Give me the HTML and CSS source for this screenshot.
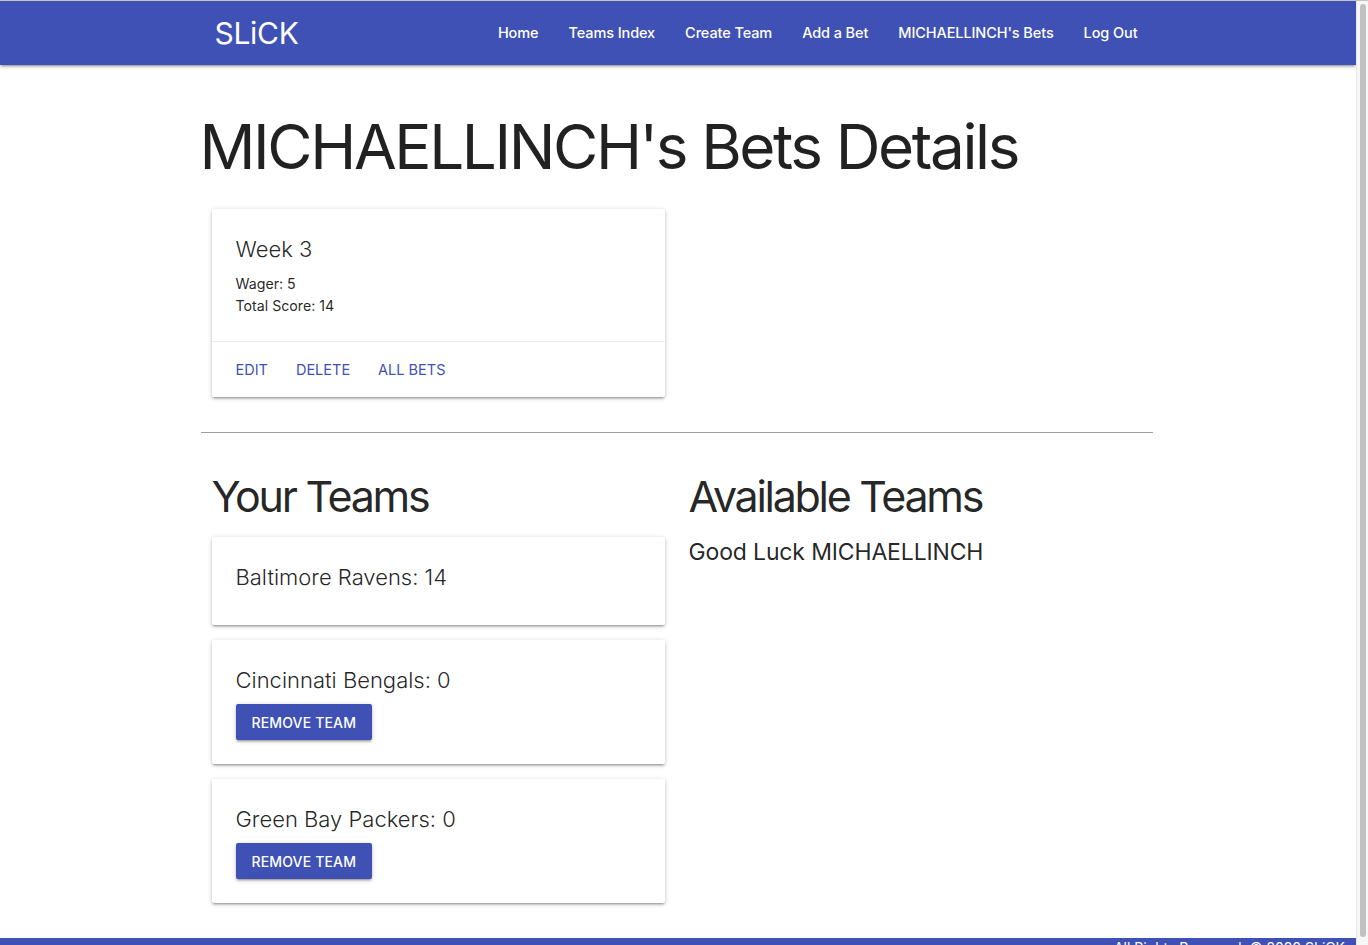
FILE: index.html
```html
<!DOCTYPE html>
<html lang="en">
<head>
<meta charset="utf-8">
<title>SLiCK</title>
<link rel="stylesheet" href="styles.css">
</head>
<body>
<div class="window">
  <div class="page">
    <nav class="nav">
      <div class="nav-wrapper">
        <a class="brand-logo" href="#">SLiCK</a>
        <ul class="nav-links">
          <li><a href="#">Home</a></li>
          <li><a href="#">Teams Index</a></li>
          <li><a href="#">Create Team</a></li>
          <li><a href="#">Add a Bet</a></li>
          <li><a href="#">MICHAELLINCH's Bets</a></li>
          <li><a href="#">Log Out</a></li>
        </ul>
      </div>
    </nav>
    <main class="container">
      <h1 class="page-title">MICHAELLINCH's Bets Details</h1>
      <div class="bet-row">
        <div class="card">
          <div class="card-content">
            <span class="card-title">Week 3</span>
            <p class="card-text">Wager: 5</p>
            <p class="card-text">Total Score: 14</p>
          </div>
          <div class="card-action">
            <a href="#">Edit</a>
            <a href="#">Delete</a>
            <a href="#">All Bets</a>
          </div>
        </div>
      </div>
      <hr class="divider">
      <div class="teams-row">
        <section class="teams-col">
          <h3 class="section-title">Your Teams</h3>
          <div class="card">
            <div class="card-content">
              <span class="card-title">Baltimore Ravens: 14</span>
            </div>
          </div>
          <div class="card">
            <div class="card-content">
              <span class="card-title">Cincinnati Bengals: 0</span>
              <button class="btn">Remove Team</button>
            </div>
          </div>
          <div class="card">
            <div class="card-content">
              <span class="card-title">Green Bay Packers: 0</span>
              <button class="btn">Remove Team</button>
            </div>
          </div>
        </section>
        <section class="avail-col">
          <h3 class="section-title">Available Teams</h3>
          <h5 class="luck">Good Luck MICHAELLINCH</h5>
        </section>
      </div>
    </main>
    <footer class="footer">
      <span class="copyright">All Rights Reserved. © 2020 SLiCK</span>
    </footer>
  </div>
  <div class="scrollbar"><div class="thumb"></div></div>
</div>
</body>
</html>
```
FILE: styles.css
```css
* { box-sizing: border-box; }
html, body {
  margin: 0;
  padding: 0;
  height: 945px;
  overflow: hidden;
  background: #fff;
}
body {
  font-family: Inter, "Noto Sans", "Liberation Sans", sans-serif;
  font-size: 15px;
  line-height: 1.5;
  color: rgba(0,0,0,0.87);
}
.window {
  display: flex;
  height: 945px;
  border-top: 1px solid #c4c4c4;
}
.page {
  width: 1356px;
  height: 944px;
  overflow: hidden;
  display: flex;
  flex-direction: column;
}
.scrollbar {
  width: 12px;
  background: #f7f7f7;
  border-left: 1px solid #e6e6e6;
  padding: 3px 2px 8px 3px;
}
.thumb {
  height: 100%;
  background: #c1c1c1;
  border-radius: 4px;
}
.nav {
  flex: none;
  height: 64px;
  background: #3f51b5;
  box-shadow: 0 2px 2px 0 rgba(0,0,0,0.14), 0 3px 1px -2px rgba(0,0,0,0.12), 0 1px 5px 0 rgba(0,0,0,0.2);
  position: relative;
  z-index: 2;
}
.nav-wrapper {
  width: 949px;
  margin: 0 auto;
  height: 64px;
  display: flex;
  align-items: center;
  justify-content: space-between;
}
.brand-logo {
  color: #fff;
  text-decoration: none;
  font-size: 30px;
  line-height: 64px;
  margin-left: 11px;
  letter-spacing: -0.3px;
}
.nav-links {
  list-style: none;
  margin: 0;
  padding: 0;
  display: flex;
}
.nav-links a {
  display: block;
  padding: 0 15px;
  color: #fff;
  text-decoration: none;
  font-size: 14.5px;
  font-weight: 500;
  letter-spacing: -0.1px;
  line-height: 66px;
}
.container {
  flex: none;
  width: 949px;
  margin: 0 auto;
}
.page-title {
  font-size: 62px;
  font-weight: 400;
  line-height: 69.3px;
  margin: 47px 0 28px -4px;
  letter-spacing: -2.4px;
}
.bet-row {
  padding-left: 8px;
  padding-bottom: 20px;
}
.card {
  width: 453px;
  background: #fff;
  border-radius: 2px;
  margin: 7.5px 0 15px 0;
  box-shadow: 0 2px 2px 0 rgba(0,0,0,0.14), 0 3px 1px -2px rgba(0,0,0,0.12), 0 1px 5px 0 rgba(0,0,0,0.2);
}
.card-content {
  padding: 24px;
}
.card-title {
  display: block;
  font-size: 22px;
  font-weight: 300;
  line-height: 32px;
  margin-bottom: 8px;
}
.card-text {
  margin: 0;
  font-size: 14.2px;
  line-height: 22px;
}
.card-action {
  border-top: 1px solid rgba(160,160,160,0.2);
  padding: 17px 24px 16px;
  display: flex;
  gap: 28px;
}
.card-action a {
  color: #3f51b5;
  text-decoration: none;
  text-transform: uppercase;
  font-size: 14.5px;
  line-height: 22px;
}
.divider {
  margin: 0 0 0 -3px;
  border: none;
  border-top: 1px solid #9e9e9e;
}
.teams-row {
  display: grid;
  grid-template-columns: 453px 1fr;
  column-gap: 24px;
  padding-left: 8px;
}
.section-title {
  font-size: 43px;
  font-weight: 400;
  line-height: 48px;
  margin: 39px 0 17px 0;
  letter-spacing: -2.3px;
}
.luck {
  font-size: 23px;
  font-weight: 400;
  line-height: 30px;
  margin: 0;
  letter-spacing: -0.15px;
}
.btn {
  display: block;
  height: 36px;
  padding: 0 16px;
  border: none;
  border-radius: 2px;
  background: #3f51b5;
  color: #fff;
  font-family: inherit;
  font-size: 14px;
  font-weight: 500;
  letter-spacing: 0.15px;
  text-transform: uppercase;
  box-shadow: 0 2px 2px 0 rgba(0,0,0,0.14), 0 3px 1px -2px rgba(0,0,0,0.12), 0 1px 5px 0 rgba(0,0,0,0.2);
}
.footer {
  flex: none;
  margin-top: 20px;
  height: 40px;
  background: #3f51b5;
  color: #fff;
  text-align: right;
  padding-right: 11px;
  font-size: 14px;
  line-height: 20px;
}
```
